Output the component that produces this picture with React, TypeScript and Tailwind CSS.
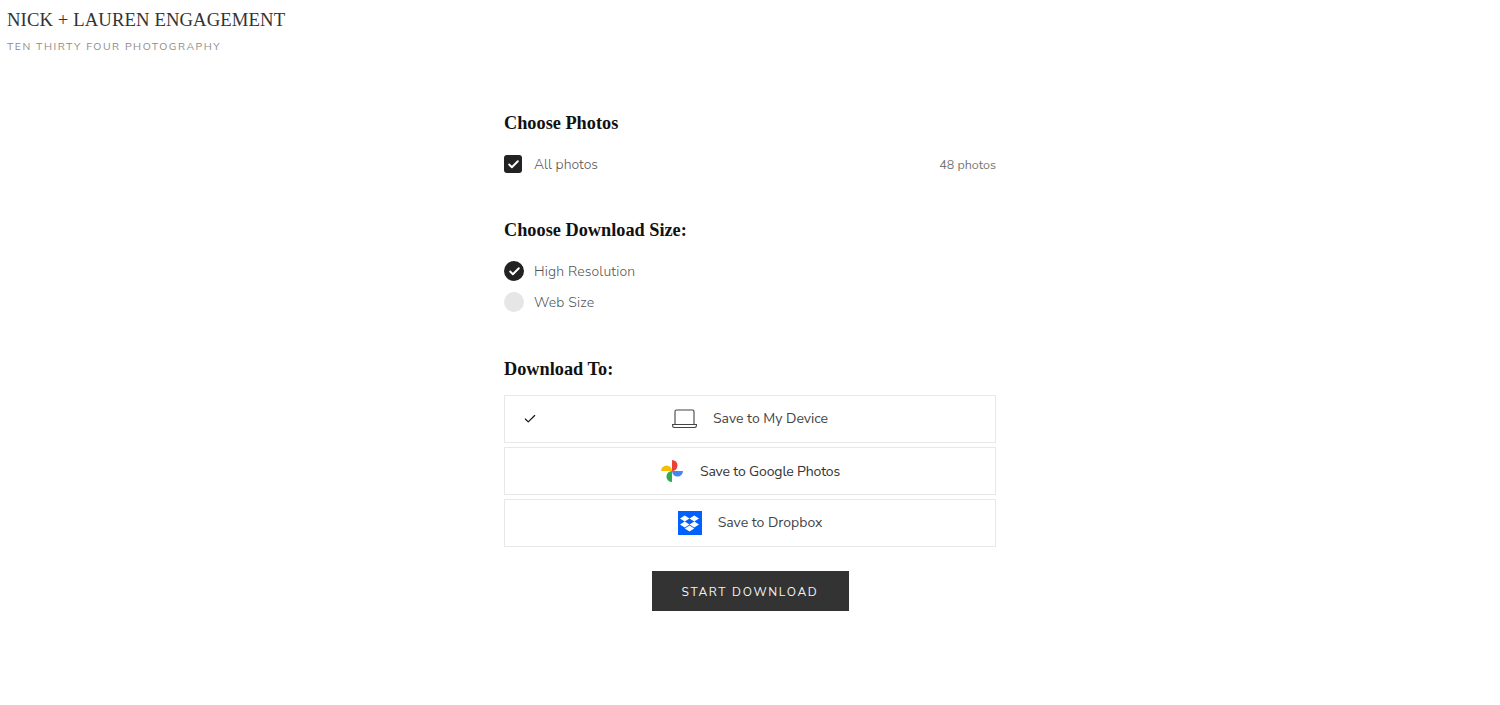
import { Check } from 'lucide-react';
import { SiDropbox } from 'react-icons/si';

const sans = "font-['Nunito_Sans','Lato','Open_Sans',sans-serif]";
const heading = "font-['Liberation_Serif',serif] text-[18.3px] leading-[24px] font-bold text-[#111]";

const LaptopIcon = () => (
  <svg width="25" height="20" viewBox="0 0 25 20" fill="none" stroke="#444" strokeWidth="1.1">
    <path d="M3 15V2.5A1.5 1.5 0 0 1 4.500 1h16A1.500 1.500 0 0 1 22 2.500V15" />
    <path d="M0.600 15.500h23.800v1.300a1.700 1.700 0 0 1-1.700 1.700H2.300a1.700 1.700 0 0 1-1.700-1.700z" />
  </svg>
);

const PinwheelIcon = () => (
  <svg width="24" height="24" viewBox="0 0 24 24">
    <path d="M12 12H1a5.500 5.500 0 0 1 11 0z" fill="#fbbc04" />
    <path d="M12 12V1a5.500 5.500 0 0 1 0 11z" fill="#ea4335" />
    <path d="M12 12h11a5.500 5.500 0 0 1-11 0z" fill="#4285f4" />
    <path d="M12 12v11a5.500 5.500 0 0 1 0-11z" fill="#34a853" />
  </svg>
);

const DropboxIcon = () => (
  <div className="w-6 h-6 bg-[#0061fe] flex items-center justify-center">
    <SiDropbox className="w-[19px] h-[19px] text-white" />
  </div>
);

const Destination = ({
  icon,
  label,
  selected,
  textClass,
}: {
  icon: React.ReactNode;
  label: string;
  selected?: boolean;
  textClass?: string;
}) => (
  <div className="relative h-12 border border-[#e8e8e8] flex items-center justify-center gap-4">
    {selected && <Check className="absolute left-[18px] top-[16px] w-[14px] h-[14px] text-[#111]" strokeWidth={2} />}
    {icon}
    <span className={`text-[14px] ${textClass ?? 'text-[#444] -mt-[2px]'}`}>{label}</span>
  </div>
);

export default function App() {
  return (
    <div className={`min-h-[705px] bg-white ${sans}`}>
      <header className="pl-[7px] pt-[8px]">
        <h1 className="font-['Liberation_Serif',serif] font-normal text-[18.7px] leading-[24px] tracking-[0.1px] text-[#333]">
          NICK + LAUREN ENGAGEMENT
        </h1>
        <p className="mt-[8px] text-[10.5px] leading-[14px] tracking-[1.55px] text-[#8c8c8c]">TEN THIRTY FOUR PHOTOGRAPHY</p>
      </header>

      <main className="w-[492px] mx-auto mt-[57px]">
        <h2 className={heading}>Choose Photos</h2>
        <div className="mt-[18px] flex items-center justify-between h-[22px]">
          <div className="flex items-center gap-[12px]">
            <div className="w-[18px] h-[18px] rounded-[3px] bg-[#222] flex items-center justify-center">
              <Check className="w-[13px] h-[13px] text-white" strokeWidth={3.5} />
            </div>
            <span className="text-[14px] font-light text-[#555]">All photos</span>
          </div>
          <span className="mt-[3px] text-[12.5px] text-[#777]">48 photos</span>
        </div>

        <h2 className={`${heading} mt-[43px]`}>Choose Download Size:</h2>
        <div className="mt-[18px] flex items-center gap-[10px] h-[22px]">
          <div className="w-5 h-5 rounded-full bg-[#222] flex items-center justify-center">
            <Check className="w-[13px] h-[13px] text-white" strokeWidth={3.5} />
          </div>
          <span className="text-[14px] tracking-[0.15px] font-light text-[#555]">High Resolution</span>
        </div>
        <div className="mt-[9px] flex items-center gap-[10px] h-[22px]">
          <div className="w-5 h-5 rounded-full bg-[#e6e6e6]" />
          <span className="text-[14px] tracking-[0.2px] font-light text-[#555]">Web Size</span>
        </div>

        <h2 className={`${heading} mt-[44px]`}>Download To:</h2>
        <div className="mt-[14px] flex flex-col gap-1">
          <Destination icon={<LaptopIcon />} label="Save to My Device" selected />
          <Destination icon={<PinwheelIcon />} label="Save to Google Photos" textClass="text-[#333] tracking-[-0.15px]" />
          <Destination icon={<DropboxIcon />} label="Save to Dropbox" />
        </div>

        <div className="mt-6 flex justify-center">
          <button className="w-[197px] h-10 pt-[1px] bg-[#333] text-[#f2f2f2] text-[12px] tracking-[1.7px]">START DOWNLOAD</button>
        </div>
      </main>
    </div>
  );
}
